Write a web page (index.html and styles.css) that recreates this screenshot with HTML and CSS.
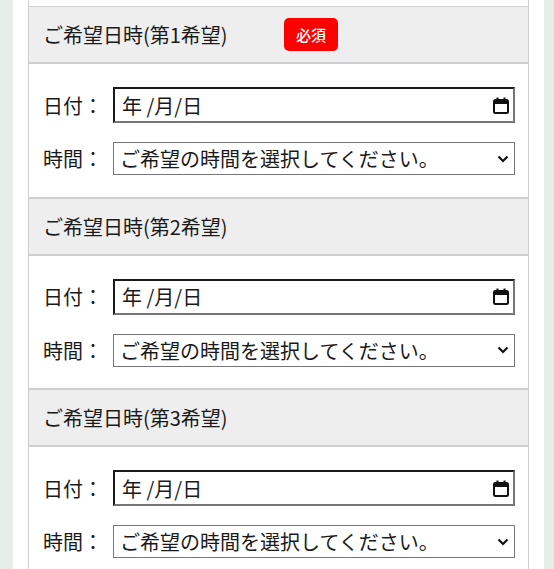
FILE: index.html
```html
<!DOCTYPE html>
<html lang="ja">
<head>
    <meta charset="UTF-8">
    <meta name="viewport" content="width=device-width, initial-scale=1.0">
    <title>ご希望日時</title>
    <link rel="stylesheet" href="styles.css">
</head>
<body>

    <div class="panel">
        <div class="prev-row"></div>

        <!-- 第1希望 -->
        <div class="choice-head">
            <span class="choice-title">ご希望日時(第1希望)</span>
            <span class="badge">必須</span>
        </div>
        <div class="choice-body">
            <div class="field">
                <span class="field-label">日付：</span>
                <div class="date-input">
                    <span class="date-text">年 /月/日</span>
                    <svg class="cal-icon" width="16" height="17" viewBox="0 0 16 17">
                        <rect x="1" y="3" width="14" height="13" rx="1.5" fill="none" stroke="#111" stroke-width="2"/>
                        <rect x="1" y="3" width="14" height="4" fill="#111"/>
                        <rect x="3.5" y="0.5" width="2" height="3" fill="#111"/>
                        <rect x="10.5" y="0.5" width="2" height="3" fill="#111"/>
                    </svg>
                </div>
            </div>
            <div class="field">
                <span class="field-label">時間：</span>
                <div class="select-box">
                    <span class="select-text">ご希望の時間を選択してください。</span>
                    <svg class="chevron" width="12" height="8" viewBox="0 0 12 8">
                        <path d="M1.5 1.5 L6 6 L10.5 1.5" fill="none" stroke="#111" stroke-width="2.2"/>
                    </svg>
                </div>
            </div>
        </div>

        <!-- 第2希望 -->
        <div class="choice-head">
            <span class="choice-title">ご希望日時(第2希望)</span>
        </div>
        <div class="choice-body">
            <div class="field">
                <span class="field-label">日付：</span>
                <div class="date-input">
                    <span class="date-text">年 /月/日</span>
                    <svg class="cal-icon" width="16" height="17" viewBox="0 0 16 17">
                        <rect x="1" y="3" width="14" height="13" rx="1.5" fill="none" stroke="#111" stroke-width="2"/>
                        <rect x="1" y="3" width="14" height="4" fill="#111"/>
                        <rect x="3.5" y="0.5" width="2" height="3" fill="#111"/>
                        <rect x="10.5" y="0.5" width="2" height="3" fill="#111"/>
                    </svg>
                </div>
            </div>
            <div class="field">
                <span class="field-label">時間：</span>
                <div class="select-box">
                    <span class="select-text">ご希望の時間を選択してください。</span>
                    <svg class="chevron" width="12" height="8" viewBox="0 0 12 8">
                        <path d="M1.5 1.5 L6 6 L10.5 1.5" fill="none" stroke="#111" stroke-width="2.2"/>
                    </svg>
                </div>
            </div>
        </div>

        <!-- 第3希望 -->
        <div class="choice-head">
            <span class="choice-title">ご希望日時(第3希望)</span>
        </div>
        <div class="choice-body">
            <div class="field">
                <span class="field-label">日付：</span>
                <div class="date-input">
                    <span class="date-text">年 /月/日</span>
                    <svg class="cal-icon" width="16" height="17" viewBox="0 0 16 17">
                        <rect x="1" y="3" width="14" height="13" rx="1.5" fill="none" stroke="#111" stroke-width="2"/>
                        <rect x="1" y="3" width="14" height="4" fill="#111"/>
                        <rect x="3.5" y="0.5" width="2" height="3" fill="#111"/>
                        <rect x="10.5" y="0.5" width="2" height="3" fill="#111"/>
                    </svg>
                </div>
            </div>
            <div class="field">
                <span class="field-label">時間：</span>
                <div class="select-box">
                    <span class="select-text">ご希望の時間を選択してください。</span>
                    <svg class="chevron" width="12" height="8" viewBox="0 0 12 8">
                        <path d="M1.5 1.5 L6 6 L10.5 1.5" fill="none" stroke="#111" stroke-width="2.2"/>
                    </svg>
                </div>
            </div>
        </div>
    </div>

</body>
</html>
```

FILE: styles.css
```css
body {
    margin: 0;
    background-color: #e4ede6;
    font-family: "Noto Sans CJK JP", "Noto Sans", sans-serif;
    color: #1a1a1a;
    overflow: hidden;
}
.panel {
    margin-left: 13px;
    width: 501px;
    padding: 0 15px 40px 15px;
    background-color: #fff;
}
.prev-row {
    height: 6px;
    border-left: 1px solid #cfcfcf;
    border-right: 1px solid #cfcfcf;
}
.choice-head {
    display: flex;
    align-items: center;
    height: 55px;
    padding-left: 14px;
    border: 1px solid #cfcfcf;
    background-color: #eee;
}
.choice-title {
    width: 241px;
    font-size: 20px;
}
.badge {
    display: inline-block;
    width: 54px;
    height: 33px;
    line-height: 33px;
    text-align: center;
    border-radius: 5px;
    background-color: #ff0000;
    color: #fff;
    font-size: 15px;
    font-weight: 500;
}
.choice-body {
    height: 134.5px;
    box-sizing: border-box;
    padding: 23px 13px 0 14px;
    border: 1px solid #cfcfcf;
}
.field {
    display: flex;
    align-items: center;
}
.field + .field {
    margin-top: 19px;
}
.field-label {
    width: 70px;
    font-size: 20px;
}
.date-input {
    display: flex;
    align-items: center;
    justify-content: space-between;
    width: 402px;
    height: 36px;
    box-sizing: border-box;
    padding: 0 4px 0 7px;
    border: 2px solid;
    border-color: #1a1a1a #767676 #767676 #1a1a1a;
}
.date-text {
    font-size: 20px;
}
.select-box {
    display: flex;
    align-items: center;
    justify-content: space-between;
    width: 402px;
    height: 33px;
    box-sizing: border-box;
    padding: 0 5px 0 6px;
    border: 1px solid #767676;
}
.select-text {
    font-size: 20px;
}
```
